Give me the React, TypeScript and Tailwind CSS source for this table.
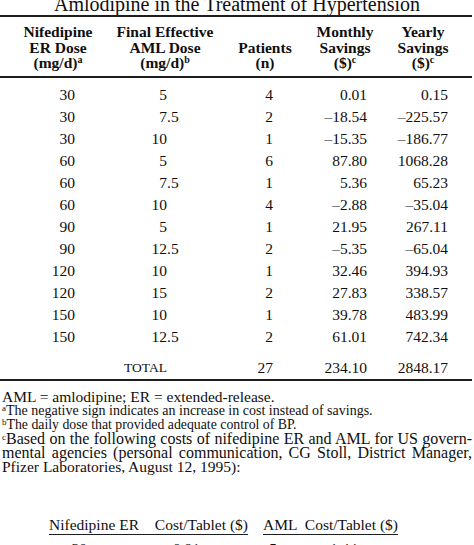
import React from 'react'

const serif = { fontFamily: '"Liberation Serif", "Times New Roman", serif' }

const rows: string[][] = [
  ['30', '5', '4', '0.01', '0.15'],
  ['30', '7.5', '2', '–18.54', '–225.57'],
  ['30', '10', '1', '–15.35', '–186.77'],
  ['60', '5', '6', '87.80', '1068.28'],
  ['60', '7.5', '1', '5.36', '65.23'],
  ['60', '10', '4', '–2.88', '–35.04'],
  ['90', '5', '1', '21.95', '267.11'],
  ['90', '12.5', '2', '–5.35', '–65.04'],
  ['120', '10', '1', '32.46', '394.93'],
  ['120', '15', '2', '27.83', '338.57'],
  ['150', '10', '1', '39.78', '483.99'],
  ['150', '12.5', '2', '61.01', '742.34'],
]

const cols = 'grid grid-cols-[116px_98px_102px_58px_98px]'

function Rule() {
  return <div className="h-[2px] bg-[#1e1e1e]" />
}

function DoseCell({ value }: { value: string }) {
  const [int, dec] = value.split('.')
  return (
    <div className="flex">
      <span className="w-[51px] text-right">{int}</span>
      {dec && <span>.{dec}</span>}
    </div>
  )
}

function HeaderCell({ lines, sup }: { lines: string[]; sup?: string }) {
  return (
    <div className="flex flex-col items-center justify-end text-center font-bold leading-[15.5px]">
      {lines.map((l, i) => (
        <span key={i}>
          {l}
          {sup && i === lines.length - 1 && <sup className="text-[10px]">{sup}</sup>}
        </span>
      ))}
    </div>
  )
}

export default function App() {
  return (
    <div className="w-[474px] h-[545px] overflow-hidden bg-white text-[#0f0f0f]" style={serif}>
      {/* cut-off title */}
      <div className="h-[15px] overflow-hidden">
        <div className="-mt-[6px] text-center text-[20px] leading-[20px]">
          Amlodipine in the Treatment of Hypertension
        </div>
      </div>
      <div className="w-[472px]">
        <Rule />
        <div className={`${cols} pt-[7px] pb-[5px] text-[15.5px]`}>
          <HeaderCell lines={['Nifedipine', 'ER Dose', '(mg/d)']} sup="a" />
          <HeaderCell lines={['Final Effective', 'AML Dose', '(mg/d)']} sup="b" />
          <HeaderCell lines={['Patients', '(n)']} />
          <HeaderCell lines={['Monthly', 'Savings', '($)']} sup="c" />
          <HeaderCell lines={['Yearly', 'Savings', '($)']} sup="c" />
        </div>
        <Rule />

        <div className="pt-[6px] text-[15.5px] leading-[22px]">
          {rows.map((r, i) => (
            <div key={i} className={cols}>
              <div className="pr-[41px] text-right">{r[0]}</div>
              <DoseCell value={r[1]} />
              <div className="pr-[43px] text-right">{r[2]}</div>
              <div className="pr-[7px] text-right">{r[3]}</div>
              <div className="pr-[24px] text-right">{r[4]}</div>
            </div>
          ))}
          <div className={`${cols} mt-[9.5px]`}>
            <div />
            <div className="flex">
              <span className="w-[51px] text-right text-[13.5px]">TOTAL</span>
            </div>
            <div className="pr-[43px] text-right">27</div>
            <div className="pr-[7px] text-right">234.10</div>
            <div className="pr-[24px] text-right">2848.17</div>
          </div>
        </div>
        <Rule />
      </div>

      {/* footnotes */}
      <div className="mt-[9px] px-[2px] text-[15.5px] leading-[14px]">
        <div>AML = amlodipine; ER = extended-release.</div>
        <div className="text-[14px]">
          <sup className="text-[9px]">a</sup>The negative sign indicates an increase in cost instead of savings.
        </div>
        <div className="text-[13.8px]">
          <sup className="text-[9px]">b</sup>The daily dose that provided adequate control of BP.
        </div>
        <div className="text-justify text-[16px] [text-align-last:justify]">
          <sup className="text-[9px]">c</sup>Based on the following costs of nifedipine ER and AML for US govern-
        </div>
        <div className="text-justify text-[16px] [text-align-last:justify]">
          mental agencies (personal communication, CG Stoll, District Manager,
        </div>
        <div>Pfizer Laboratories, August 12, 1995):</div>
      </div>

      {/* cost sub-table */}
      <div className="mt-[42px] flex gap-[15px] pl-[49px] text-[15.5px] leading-[18px]">
        <div className="flex w-[199px] justify-between border-b-[1.5px] border-[#1e1e1e]">
          <span>Nifedipine ER</span>
          <span>Cost/Tablet ($)</span>
        </div>
        <div className="flex w-[135px] justify-between border-b-[1.5px] border-[#1e1e1e]">
          <span>AML</span>
          <span>Cost/Tablet ($)</span>
        </div>
      </div>
      <div className="mt-[3px] flex text-[15.5px] leading-[22px]">
        <span className="w-[87px] text-right">30</span>
        <span className="w-[113px] text-right">0.91</span>
        <span className="w-[77px] text-right">5</span>
        <span className="w-[80px] text-right">1.44</span>
      </div>
    </div>
  )
}
